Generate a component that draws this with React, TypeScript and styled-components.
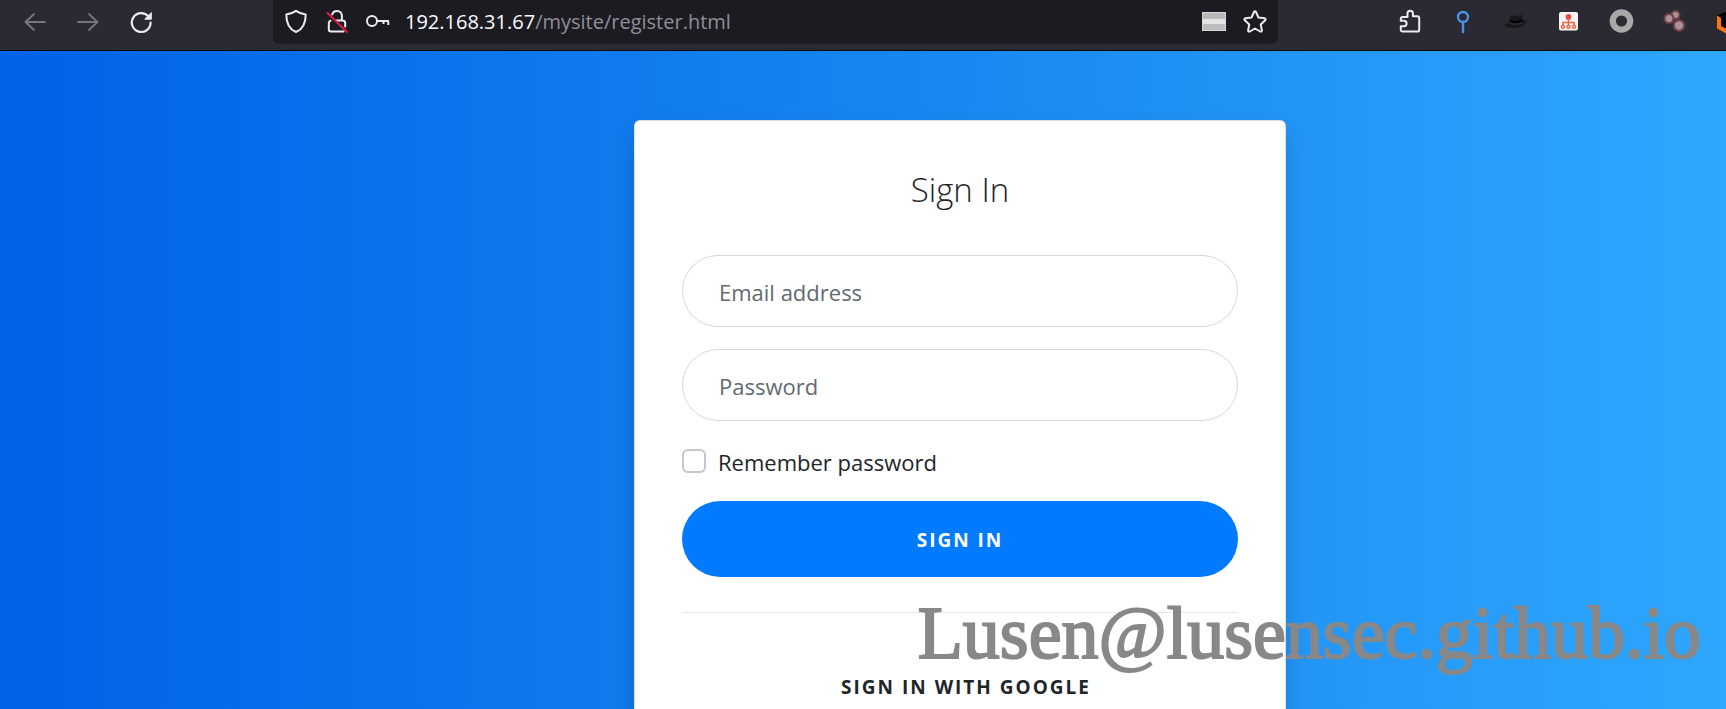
import React from "react";
import styled, { createGlobalStyle } from "styled-components";

const GlobalStyle = createGlobalStyle`
  *, *::before, *::after { box-sizing: border-box; }
  body {
    margin: 0;
    font-family: "Open Sans", "Noto Sans", sans-serif;
    color: #212529;
  }
`;

const Browser = styled.div`
  position: relative;
  display: flex;
  flex-direction: column;
  height: 100vh;
  overflow: hidden;
`;

const Toolbar = styled.header`
  display: flex;
  flex: none;
  height: 51px;
  background: #2b2a33;
  border-bottom: 1px solid #0c0c0d;
  overflow: hidden;
`;

const IconGroup = styled.div<{ $gap: number; $width?: number; $start?: number }>`
  display: flex;
  flex: none;
  align-items: center;
  height: 44px;
  gap: ${(p) => p.$gap}px;
  width: ${(p) => (p.$width ? `${p.$width}px` : "auto")};
  padding-left: ${(p) => p.$start ?? 0}px;
`;

const IconButton = styled.button<{ $dim?: boolean }>`
  display: flex;
  flex: none;
  padding: 0;
  border: 0;
  background: none;
  color: ${(p) => (p.$dim ? "#77767d" : "#ececf0")};

  svg {
    display: block;
    width: 24px;
    height: 24px;
    overflow: visible;
  }
`;

const AddressBar = styled.div`
  display: flex;
  flex: 1;
  align-items: center;
  min-width: 0;
  height: 44px;
  padding: 0 11px;
  gap: 15px;
  background: #1c1b22;
  border-radius: 0 0 6px 6px;
`;

const Url = styled.div`
  flex: 1;
  min-width: 0;
  overflow: hidden;
  white-space: nowrap;
  font-size: 20px;
  line-height: 28px;
  color: #8f8f96;
`;

const Host = styled.span`
  color: #fbfbfe;
`;

const Page = styled.main`
  display: grid;
  flex: 1;
  grid-template-columns: minmax(0, 634fr) minmax(0, 652px) minmax(0, 440fr);
  align-items: start;
  min-height: 0;
  padding-top: 69px;
  overflow: hidden;
  background: linear-gradient(to right, #0062e6, #33aeff 111%);
`;

const Card = styled.section`
  grid-column: 2;
  padding: 48px 47px 47px;
  background: #fff;
  border: 1px solid rgba(0, 0, 0, 0.125);
  border-radius: 6px;
  box-shadow: 0 12px 24px rgba(0, 0, 0, 0.15);
`;

const Title = styled.h1`
  margin: 0 0 44px;
  font-size: 33px;
  font-weight: 300;
  line-height: 42px;
  text-align: center;
`;

const Form = styled.form`
  display: flex;
  flex-direction: column;
`;

const TextField = styled.input`
  width: 100%;
  height: 72px;
  margin-bottom: 22px;
  padding: 2px 36px 0;
  border: 1px solid #d3d8de;
  border-radius: 36px;
  background: #fff;
  color: #495057;
  font: inherit;
  font-size: 22px;
  outline: none;

  &::placeholder {
    color: #626a71;
    opacity: 1;
  }
`;

const Remember = styled.div`
  display: flex;
  align-items: center;
  gap: 12px;
  margin-bottom: 22px;
  font-size: 22px;
  line-height: 34px;

  label {
    padding-top: 2px;
  }
`;

const Checkbox = styled.input`
  appearance: none;
  width: 24px;
  height: 24px;
  margin: 0;
  border: 2px solid #c3c8ce;
  border-radius: 6px;
  background: #fff;

  &:checked {
    background: #007bff;
    border-color: #007bff;
  }
`;

const PillButton = styled.button<{ $primary?: boolean }>`
  height: 76px;
  padding: 2px 24px 0 ${(p) => (p.$primary ? 24 : 36)}px;
  border: 0;
  border-radius: 38px;
  background: ${(p) => (p.$primary ? "#007bff" : "transparent")};
  color: ${(p) => (p.$primary ? "#fff" : "#212529")};
  font: inherit;
  font-size: 19px;
  font-weight: 700;
  letter-spacing: 2px;
  text-transform: uppercase;
`;

const Divider = styled.hr`
  width: 100%;
  height: 1px;
  margin: 35px 0;
  border: 0;
  background: #e5e5e5;
`;

const Watermark = styled.div`
  position: absolute;
  right: 25px;
  bottom: 36px;
  font-family: "Liberation Serif", serif;
  font-size: 74px;
  line-height: 80px;
  white-space: nowrap;
  color: #888;
  -webkit-text-stroke: 2px #888;
  pointer-events: none;
`;

const line = {
  fill: "none",
  stroke: "currentColor",
  strokeWidth: 2,
  strokeLinecap: "round" as const,
  strokeLinejoin: "round" as const,
};

const BackIcon = () => (
  <svg viewBox="0 0 24 24" {...line} strokeWidth={1.8}>
    <path d="M22 12H3M11 4 2.5 12 11 20" />
  </svg>
);

const ForwardIcon = () => (
  <svg viewBox="0 0 24 24" {...line} strokeWidth={1.8}>
    <path d="M2 12h19M13 4l8.500 8L13 20" />
  </svg>
);

const ReloadIcon = () => (
  <svg viewBox="0 0 24 24" {...line} strokeWidth={2.200}>
    <path d="M19.200 6.300A9.400 9.400 0 1 0 21.600 12.500" />
    <path d="M22.300 3v6.200h-6.200z" fill="currentColor" strokeWidth={1} />
  </svg>
);

const ShieldIcon = () => (
  <svg viewBox="0 0 24 24" {...line}>
    <path d="M12 .8c3 2 6.200 3.300 9.700 3.700 0 8.500-2.700 14.800-9.700 17.500C5 19.300 2.300 13 2.300 4.500 5.800 4.100 9 2.800 12 .8z" />
  </svg>
);

const InsecureIcon = () => (
  <svg viewBox="0 0 24 24" {...line}>
    <path d="M7.200 4.600C7.800 2.300 9.600.9 12 .9c2.900 0 4.900 2 4.900 4.900v4.700h.6c1.700 0 2.700 1 2.700 2.500v3.500M11.500 10.500h5M5.500 10.800c-1.100.4-1.700 1.300-1.700 2.500v6c0 1.400.8 2.200 2.200 2.200h12.500" />
    <path d="M2.500 3 22 22" stroke="#e21b45" />
  </svg>
);

const KeyIcon = () => (
  <svg viewBox="0 0 24 24" {...line}>
    <circle cx="6" cy="11" r="5" />
    <path d="M11 11h12M17.500 11.500v2.500M22.300 11.500v3.500" strokeLinecap="butt" />
  </svg>
);

const FlagIcon = () => (
  <svg viewBox="0 0 24 24">
    <rect y="2" width="24" height="19" fill="#d8d8d8" />
    <rect x="1" y="3" width="22" height="6" fill="#b9b9b9" />
    <rect x="1" y="9" width="22" height="5" fill="#e4e4e4" />
    <rect x="1" y="14" width="22" height="6" fill="#bdbdbd" />
  </svg>
);

const StarIcon = () => (
  <svg viewBox="0 0 24 24" {...line}>
    <path d="M12 1.300c.5 0 .8.300 1 .7l2.500 5.600 6.100.7c1.100.1 1.400 1.300.6 2l-4.500 4.100 1.200 5.900c.2 1.100-.8 1.700-1.700 1.200L12 18.500l-5.200 3c-.9.5-1.900-.1-1.700-1.200l1.200-5.900-4.500-4.100c-.8-.7-.5-1.900.6-2l6.100-.7L11 2c.2-.4.500-.7 1-.7z" />
  </svg>
);

const PuzzleIcon = () => (
  <svg viewBox="0 0 24 24" {...line}>
    <path d="M9.500 7V3.500a2.700 2.700 0 0 1 5.400 0V6.300h4.400c1.300 0 1.900.6 1.900 1.900v11.500c0 1.300-.6 1.900-1.900 1.900H4.700c-1.300 0-1.900-.6-1.900-1.900v-3.500h3.100a2.700 2.700 0 0 0 0-5.400H2.800V9c0-1.300.6-1.900 1.900-1.900z" />
  </svg>
);

const PinIcon = () => (
  <svg viewBox="0 0 24 24" fill="none" stroke="#4594ea" strokeWidth={2.400}>
    <circle cx="12" cy="7" r="5" />
    <path d="M12 12v10" strokeLinecap="round" />
  </svg>
);

const HatIcon = () => (
  <svg viewBox="0 0 24 24">
    <path
      d="M.5 14.500c.3-2.300 2-3.300 5-3C5.800 6.500 7 4.200 9.600 4.200c2.200 0 3.200.3 5 0 3-.6 3.800 1.700 4.200 6.300 2 .2 3.700 0 4.700-1.200-.6 5.200-6.500 8.700-13 8.700C5.200 18 .3 17.300.5 14.500z"
      fill="#18181c"
    />
    <path d="M1 14.500c1-1.600 2.500-2.200 4.500-1.800 3 2.300 9.500 2 13.300-.7M9 4.800c3 .8 5 .3 7.500-.1" fill="none" stroke="#3c3b43" strokeWidth={0.8} />
    <path d="M5.600 10.500c3.400 2.300 9.800 2 13.100-.6" fill="none" stroke="#000" strokeWidth={2} />
  </svg>
);

const SitemapIcon = () => (
  <svg viewBox="0 0 24 24" fill="none" stroke="#ee6849" strokeWidth={1.500}>
    <rect x="2" y="2" width="19" height="18.500" rx="2" fill="#f8f5f4" stroke="none" />
    <circle cx="11.500" cy="7" r="2.900" fill="#e4513d" stroke="none" />
    <path d="M11.500 9v6M6 15.500v-3h11v3" />
    <circle cx="6" cy="16.800" r="1.500" />
    <circle cx="11.500" cy="16.800" r="1.500" />
    <circle cx="17" cy="16.800" r="1.500" />
  </svg>
);

const RingIcon = () => (
  <svg viewBox="0 0 24 24" fill="none" stroke="#a8a8a8" strokeWidth={6.200}>
    <circle cx="11.500" cy="11" r="8.700" />
  </svg>
);

const DotsIcon = () => (
  <svg viewBox="0 0 24 24" fill="#a99294" stroke="#713f48" strokeWidth={2}>
    <circle cx="12.500" cy="5" r="4" />
    <circle cx="6" cy="8.500" r="4.500" />
    <circle cx="16" cy="15.500" r="5.200" />
  </svg>
);

const HexIcon = () => (
  <svg viewBox="0 0 24 24">
    <path d="M1 5.500 13 0l12 5.500v13L13 25 1 18.500z" fill="#050505" />
    <path d="M1 5.500v13L13 25v-5l-8-4V8z" fill="#ff720d" />
  </svg>
);

const extensions = [
  { name: "Extensions", Icon: PuzzleIcon },
  { name: "Pin", Icon: PinIcon },
  { name: "Hat", Icon: HatIcon },
  { name: "Sitemap", Icon: SitemapIcon },
  { name: "Ring", Icon: RingIcon },
  { name: "Dots", Icon: DotsIcon },
  { name: "Hexagon", Icon: HexIcon },
];

export default function App() {
  return (
    <Browser>
      <GlobalStyle />
      <Toolbar>
        <IconGroup $gap={29} $width={273} $start={23}>
          <IconButton $dim aria-label="Back"><BackIcon /></IconButton>
          <IconButton $dim aria-label="Forward"><ForwardIcon /></IconButton>
          <IconButton aria-label="Reload"><ReloadIcon /></IconButton>
        </IconGroup>
        <AddressBar>
          <IconGroup $gap={17}>
            <IconButton aria-label="Tracking protection"><ShieldIcon /></IconButton>
            <IconButton aria-label="Connection not secure"><InsecureIcon /></IconButton>
            <IconButton aria-label="Saved logins"><KeyIcon /></IconButton>
          </IconGroup>
          <Url><Host>192.168.31.67</Host>/mysite/register.html</Url>
          <IconGroup $gap={17}>
            <IconButton aria-label="Site language"><FlagIcon /></IconButton>
            <IconButton aria-label="Bookmark"><StarIcon /></IconButton>
          </IconGroup>
        </AddressBar>
        <IconGroup $gap={29} $width={448} $start={120}>
          {extensions.map(({ name, Icon }) => (
            <IconButton key={name} aria-label={name}><Icon /></IconButton>
          ))}
        </IconGroup>
      </Toolbar>
      <Page>
        <Card>
          <Title>Sign In</Title>
          <Form onSubmit={(e) => e.preventDefault()}>
            <TextField type="email" placeholder="Email address" aria-label="Email address" />
            <TextField type="password" placeholder="Password" aria-label="Password" />
            <Remember>
              <Checkbox type="checkbox" id="remember" />
              <label htmlFor="remember">Remember password</label>
            </Remember>
            <PillButton type="submit" $primary>Sign in</PillButton>
            <Divider />
            <PillButton type="button">Sign in with Google</PillButton>
          </Form>
        </Card>
      </Page>
      <Watermark>Lusen@lusensec.github.io</Watermark>
    </Browser>
  );
}
